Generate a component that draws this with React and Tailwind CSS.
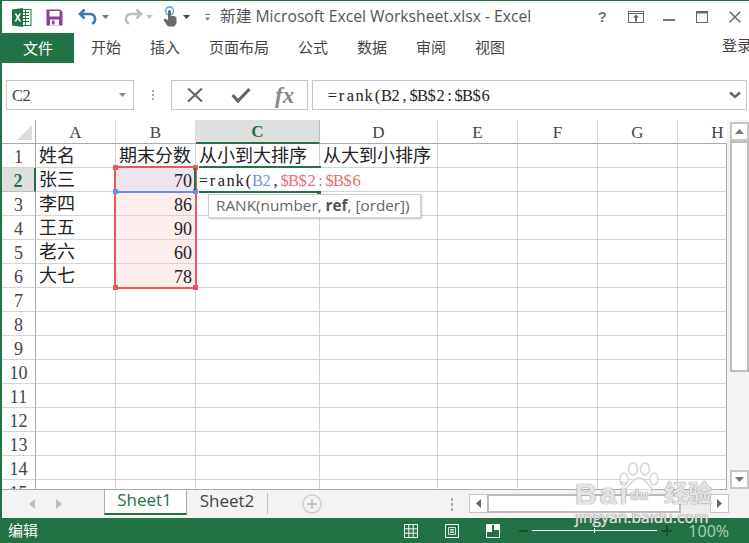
import React from "react";

const serif = "font-['Liberation_Serif','Noto_Sans_CJK_SC',serif]";
const cjk = "font-['Liberation_Serif','Noto_Sans_CJK_SC',sans-serif]";
const ui = "font-['Open_Sans','Noto_Sans_CJK_SC',sans-serif]";

const cols = ["A", "B", "C", "D", "E", "F", "G", "H"];
const colTracks = "grid-cols-[34px_80px_80px_124px_118px_80px_80px_80px_80px]";

const rowsData = {
  1: ["姓名", "期末分数", "从小到大排序", "从大到小排序"],
  2: ["张三", "70"],
  3: ["李四", "86"],
  4: ["王五", "90"],
  5: ["老六", "60"],
  6: ["大七", "78"],
};
const rowNums = Array.from({ length: 15 }, (_, i) => i + 1);

// The reference's cell font has half-width latin glyphs: every character takes 9px.
function Half({ text, className = "" }) {
  return (
    <span className={`inline-flex ${className}`}>
      {text.split("").map((ch, i) => (
        <span key={i} className="w-[9px] flex justify-center">{ch}</span>
      ))}
    </span>
  );
}

function ExcelLogo() {
  return (
    <svg width="21" height="21" viewBox="0 0 21 21">
      <rect x="9" y="2.5" width="11" height="16" fill="#fff" stroke="#217346" />
      <path d="M12 5.500h6M12 8.500h6M12 11.500h6M12 14.500h6M14.500 3v15" stroke="#217346" strokeWidth="1" fill="none" />
      <path d="M1 2.500L12 1v19L1 18.500z" fill="#217346" />
      <path d="M3.600 6.500h1.900l1.300 2.500 1.400-2.500h1.800l-2.200 4 2.300 4H8.400L6.800 11.700 5.300 14.500H3.500l2.300-4z" fill="#fff" />
    </svg>
  );
}
function SaveIcon() {
  return (
    <svg width="17" height="17" viewBox="0 0 17 17">
      <path d="M0.500 0.500h13.500l2.500 2.500v13.500h-16z" fill="#8a3f9d" />
      <rect x="3.500" y="2" width="10" height="5.500" fill="#fff" />
      <rect x="4" y="10.500" width="9" height="6" fill="#fff" />
      <rect x="6" y="11.500" width="2.500" height="4" fill="#8a3f9d" />
    </svg>
  );
}
function UndoIcon({ color }) {
  return (
    <svg width="20" height="18" viewBox="0 0 20 18">
      <path d="M6.500 1.500L2 6l4.500 4.500M3 6h9a5 5 0 0 1 2 9.600" fill="none" stroke={color} strokeWidth="2.600" />
    </svg>
  );
}
function RedoIcon({ color }) {
  return (
    <svg width="20" height="18" viewBox="0 0 20 18">
      <path d="M13.500 1.500L18 6l-4.500 4.500M17 6H8a5 5 0 0 0-2 9.600" fill="none" stroke={color} strokeWidth="2.600" />
    </svg>
  );
}
function TouchIcon() {
  return (
    <svg width="16" height="22" viewBox="0 0 16 22">
      <circle cx="7.500" cy="5" r="4" fill="none" stroke="#5b9bd5" strokeWidth="1.500" />
      <path d="M6 5.500a1.500 1.500 0 0 1 3 0V10h3.500l2 1.500V17l-2 3.500H6L1.500 14l1-1.500L6 14z" fill="#6a6a6a" />
    </svg>
  );
}
function Caret({ color = "#6a6a6a", w = 7 }) {
  return (
    <svg width={w} height="4" viewBox="0 0 7 4">
      <path d="M0 0h7L3.500 4z" fill={color} />
    </svg>
  );
}

function TitleBar() {
  return (
    <div className="h-[32px] flex items-center shrink-0">
      <div className="ml-[9px]"><ExcelLogo /></div>
      <div className="ml-[14px]"><SaveIcon /></div>
      <div className="ml-[15px]"><UndoIcon color="#3f78b5" /></div>
      <div className="ml-[4px]"><Caret color="#777" /></div>
      <div className="ml-[14px]"><RedoIcon color="#bdbdbd" /></div>
      <div className="ml-[3px]"><Caret color="#c4c4c4" /></div>
      <div className="ml-[9px]"><TouchIcon /></div>
      <div className="ml-[5px]"><Caret color="#444" /></div>
      <div className="ml-[15px] flex flex-col gap-[2px] items-center">
        <div className="w-[5px] h-px bg-[#777]" />
        <Caret color="#777" w={5} />
      </div>
      <div className={`ml-[10px] text-[15.700px] leading-none text-[#555] whitespace-nowrap ${ui}`}>
        新建 Microsoft Excel Worksheet.xlsx - Excel
      </div>
      <div className="ml-auto flex items-center">
        <span className="text-[15px] font-bold text-[#777] font-['Liberation_Sans',sans-serif] mr-[21px]">?</span>
        <svg width="16" height="12" viewBox="0 0 16 12" className="mr-[19px]">
          <rect x="0.500" y="0.500" width="15" height="11" fill="none" stroke="#666" />
          <path d="M1 2.500h14" stroke="#666" />
          <path d="M8 3.500l3 3H9v4H7v-4H5z" fill="#666" />
        </svg>
        <div className="w-[12px] h-[2px] bg-[#777] mt-[6px] mr-[21px]" />
        <svg width="12" height="12" viewBox="0 0 12 12" className="mr-[21px]">
          <rect x="0.500" y="0.500" width="11" height="11" fill="none" stroke="#666" />
          <path d="M0 1.500h12" stroke="#666" strokeWidth="2" />
        </svg>
        <svg width="12" height="12" viewBox="0 0 12 12" className="mr-[8px]">
          <path d="M0.700 0.700l10.600 10.600M11.300 0.700L0.700 11.300" stroke="#666" strokeWidth="1.500" />
        </svg>
      </div>
    </div>
  );
}

function RibbonTabs() {
  const tabs = ["开始", "插入", "页面布局", "公式", "数据", "审阅", "视图"];
  return (
    <div className={`h-[30px] flex items-center shrink-0 text-[15px] leading-none text-[#444] ${ui}`}>
      <div className="w-[72px] h-full bg-[#217346] text-white flex items-center justify-center">文件</div>
      <div className="ml-[17px] flex gap-[29px] -mt-[2px]">
        {tabs.map((t) => <span key={t}>{t}</span>)}
      </div>
      <span className="absolute left-[720px] top-[37px] whitespace-nowrap">登录</span>
    </div>
  );
}

function FormulaBar() {
  return (
    <div className="h-[30px] mt-[17px] flex shrink-0 items-stretch">
      <div className={`ml-[4px] w-[128px] border border-[#c6c6c6] flex items-center pl-[6px] pr-[7px] text-[16.500px] leading-none text-[#444] ${serif}`}>
        <Half text="C2" className="pt-[2px]" />
        <span className="ml-auto flex"><Caret color="#888" /></span>
      </div>
      <div className="w-[37px] flex flex-col items-center justify-center gap-[2px]">
        <i className="w-[2px] h-[2px] bg-[#a8a8a8]" />
        <i className="w-[2px] h-[2px] bg-[#a8a8a8]" />
        <i className="w-[2px] h-[2px] bg-[#a8a8a8]" />
      </div>
      <div className="w-[137px] border border-[#c6c6c6] flex items-center pl-[14px]">
        <svg width="18" height="16" viewBox="0 0 18 16">
          <path d="M2 1.500l14 13M16 1.500L2 14.500" stroke="#666" strokeWidth="2.200" />
        </svg>
        <svg width="20" height="16" viewBox="0 0 20 16" className="ml-[27px]">
          <path d="M1.500 8l5.500 6L18.500 2" fill="none" stroke="#666" strokeWidth="3.200" />
        </svg>
        <span className="ml-[24px] text-[23px] italic font-bold leading-none text-[#888] font-['Liberation_Serif',serif]">fx</span>
      </div>
      <div className="ml-[4px] flex-1 mr-[2px] border border-[#c6c6c6] flex items-center pl-[15px] pr-[5px]">
        <Half text="=rank(B2,$B$2:$B$6" className={`pt-[3px] text-[16.500px] leading-none text-[#222] ${serif}`} />
        <svg width="12" height="8" viewBox="0 0 12 8" className="ml-auto">
          <path d="M1 1.500l5 4.500 5-4.500" fill="none" stroke="#666" strokeWidth="2.400" />
        </svg>
      </div>
    </div>
  );
}

function Sheet() {
  return (
    <div className="mt-[10px] h-[370px] flex shrink-0 relative">
      <div className="w-[725px] h-[370px] overflow-hidden relative shrink-0 border-b border-[#ababab]">
        <div className={`grid ${colTracks} auto-rows-[24px] leading-none text-[#333] ${cjk}`}>
          <div className="border-r border-b border-[#ababab] relative flex items-end justify-end pr-[3px] pb-[3px]">
            <svg width="15" height="15" viewBox="0 0 15 15"><path d="M15 0v15H0z" fill="#dcdcdc" /></svg>
          </div>
          {cols.map((c) => (
            <div
              key={c}
              className={
                c === "C"
                  ? "text-[17px] pt-[1px] bg-[#dfdfdf] border-b-2 border-r border-b-[#217346] border-r-[#bdbdbd] flex items-center justify-center text-[#217346] font-bold"
                  : "text-[17px] pt-[1px] border-b border-r border-b-[#ababab] border-r-[#d8d8d8] flex items-center justify-center text-[#444]"
              }
            >
              {c}
            </div>
          ))}
          {rowNums.map((r) => (
            <React.Fragment key={r}>
              <div
                className={
                  r === 2
                    ? "text-[18px] pt-[2px] bg-[#dfdfdf] border-r-2 border-b border-r-[#217346] border-b-[#bdbdbd] flex items-center justify-center text-[#217346] font-bold"
                    : "text-[18px] pt-[2px] border-r border-b border-r-[#ababab] border-b-[#d4d4d4] flex items-center justify-center text-[#444]"
                }
              >
                {r}
              </div>
              {cols.map((c, ci) => {
                const v = (rowsData[r] || [])[ci];
                const inB = c === "B" && r >= 2 && r <= 6;
                const bg = inB ? (r === 2 ? "bg-[#eee4ee]" : "bg-[#fdeeee]") : "";
                const align = inB ? "justify-end pr-[3px] pt-[2px]" : "pl-[3px] pt-[1px]";
                return (
                  <div
                    key={c}
                    className={`text-[18px] text-[#222] border-r border-b border-[#d4d4d4] flex items-center whitespace-nowrap ${bg} ${align}`}
                  >
                    {v}
                  </div>
                );
              })}
            </React.Fragment>
          ))}
        </div>

        {/* right edge of the cell area, below the column headers */}
        <i className="absolute left-[724px] top-[23px] bottom-0 w-px bg-[#ababab]" />

        {/* range selection */}
        <div className="absolute left-[112px] top-[46px] w-[83px] h-[123px] border-2 border-[#e8595c]" />
        <i className="absolute left-[111px] top-[45px] w-[5px] h-[5px] bg-[#e8595c]" />
        <i className="absolute left-[191px] top-[45px] w-[5px] h-[5px] bg-[#e8595c]" />
        <i className="absolute left-[111px] top-[165px] w-[5px] h-[5px] bg-[#e8595c]" />
        <i className="absolute left-[191px] top-[165px] w-[5px] h-[5px] bg-[#e8595c]" />
        <div className="absolute left-[114px] top-[71px] w-[79px] h-[2px] bg-[#6b8ee0]" />
        <i className="absolute left-[111px] top-[69px] w-[5px] h-[5px] bg-[#6b8ee0]" />
        <i className="absolute left-[191px] top-[69px] w-[5px] h-[5px] bg-[#6b8ee0]" />

        {/* active cell */}
        <div className="absolute left-[197px] top-[46px] w-[122px] h-[2px] bg-[#217346]" />
        <div className="absolute left-[192px] top-[48px] w-[2px] h-[22px] bg-[#217346]" />
        <div className="absolute left-[197px] top-[71px] w-[118px] h-[2px] bg-[#217346]" />
        <i className="absolute left-[315px] top-[71px] w-[4px] h-[3px] bg-[#217346]" />
        <div className={`absolute left-[197px] top-[48px] h-[23px] pt-[3px] bg-white flex items-center text-[16.500px] leading-none whitespace-nowrap ${serif}`}>
          <Half text="=rank(" className="text-[#222]" />
          <Half text="B2" className="text-[#6f94e6]" />
          <Half text="," className="text-[#222]" />
          <Half text="$B$2:$B$6" className="text-[#ee6a6d]" />
        </div>

        {/* function tooltip */}
        <div className={`absolute left-[206px] top-[74px] w-[213px] h-[24px] bg-white border border-[#cfcfcf] shadow-[1px_1px_2px_rgba(0,0,0,0.25)] flex items-center pl-[7px] text-[15.300px] leading-none text-[#666] whitespace-nowrap ${ui}`}>
          RANK(number,&nbsp;<b className="font-bold text-[#555]">ref</b>, [order])
        </div>
      </div>

      <div className="w-[22px] bg-[#f3f3f3] flex flex-col items-start pl-[3px] pt-[2px]">
        <div className="w-[19px] h-[19px] border-2 border-[#c6c6c6] bg-white flex items-center justify-center shrink-0">
          <svg width="9" height="5" viewBox="0 0 9 5"><path d="M0 5h9L4.500 0z" fill="#777" /></svg>
        </div>
        <div className="w-[19px] h-[231px] border-2 border-[#bcbcbc] bg-white shrink-0" />
        <div className="w-[19px] h-[19px] mt-auto mb-px border-2 border-[#c6c6c6] bg-white flex items-center justify-center shrink-0">
          <svg width="9" height="5" viewBox="0 0 9 5"><path d="M0 0h9L4.500 5z" fill="#777" /></svg>
        </div>
      </div>
    </div>
  );
}

function TabBar() {
  return (
    <div className={`h-[28px] bg-[#f3f3f3] flex items-start shrink-0 ${ui}`}>
      <div className="w-[102px] h-full flex items-center pl-[27px] gap-[21px]">
        <svg width="6" height="10" viewBox="0 0 6 10"><path d="M6 0v10L0 5z" fill="#bdbdbd" /></svg>
        <svg width="6" height="10" viewBox="0 0 6 10"><path d="M0 0v10l6-5z" fill="#bdbdbd" /></svg>
      </div>
      <div className="w-[83px] h-[26px] pb-[4px] pr-[2px] bg-white border-l border-r border-[#ababab] border-b-2 border-b-[#217346] -mt-px text-[#217346] text-[17px] leading-none flex items-center justify-center">
        Sheet1
      </div>
      <div className="w-[81px] h-[21px] mt-[3px] pb-[7px] text-[#444] text-[17px] leading-none flex items-center justify-center border-r border-[#bdbdbd]">
        Sheet2
      </div>
      <svg width="20" height="20" viewBox="0 0 20 20" className="ml-[34px] mt-[4px]">
        <circle cx="10" cy="10" r="9" fill="none" stroke="#d0d0d0" strokeWidth="1.500" />
        <path d="M10 5v10M5 10h10" stroke="#c4c4c4" strokeWidth="2" />
      </svg>
      <div className="ml-[129px] mt-[8px] flex flex-col gap-[2px]">
        <i className="w-[2px] h-[3px] bg-[#a8a8a8]" />
        <i className="w-[2px] h-[3px] bg-[#a8a8a8]" />
        <i className="w-[2px] h-[3px] bg-[#a8a8a8]" />
      </div>
      <div className="ml-[16px] mt-[4px] flex">
        <div className="w-[19px] h-[19px] border border-[#c6c6c6] bg-white flex items-center justify-center">
          <svg width="5" height="9" viewBox="0 0 5 9"><path d="M5 0v9L0 4.500z" fill="#666" /></svg>
        </div>
        <div className="w-[194px] h-[19px] border-2 border-[#bcbcbc] bg-white -ml-px" />
        <div className="w-[29px] h-[19px] bg-[#ededed]" />
        <div className="w-[19px] h-[19px] border border-[#c6c6c6] bg-white flex items-center justify-center">
          <svg width="5" height="9" viewBox="0 0 5 9"><path d="M0 0v9l5-4.500z" fill="#666" /></svg>
        </div>
      </div>
    </div>
  );
}

function StatusBar() {
  return (
    <div className={`h-[25px] bg-[#217346] flex items-center shrink-0 text-white ${ui}`}>
      <span className="ml-[6px] text-[15px] leading-none">编辑</span>
      <div className="ml-auto flex items-center">
        <svg width="14" height="14" viewBox="0 0 14 14">
          <path d="M0.500 0.500h13v13h-13zM0.500 4.800h13M0.500 9.200h13M4.800 0.500v13M9.200 0.500v13" fill="none" stroke="#fff" />
        </svg>
        <svg width="14" height="14" viewBox="0 0 14 14" className="ml-[27px]">
          <path d="M0.500 0.500h13v13h-13z" fill="none" stroke="#fff" />
          <path d="M3.500 3.500h7v7h-7zM5 5.500h4M5 7h4M5 8.500h4" fill="none" stroke="#fff" strokeWidth="0.800" />
        </svg>
        <svg width="14" height="14" viewBox="0 0 14 14" className="ml-[27px]">
          <path d="M0.500 0.500h13v13h-13z" fill="none" stroke="#fff" />
          <path d="M1 1h5v7H1zM8 1h5v5H8z" fill="#fff" />
        </svg>
        <i className="ml-[19px] w-[9px] h-[2px] bg-[#154d2d]" />
        <div className="ml-[4px] w-[125px] h-px bg-white relative">
          <i className="absolute left-[62px] -top-[2px] w-px h-[5px] bg-white" />
        </div>
        <svg width="12" height="12" viewBox="0 0 12 12" className="ml-[4px]">
          <path d="M6 0.500v11M0.500 6h11" stroke="#154d2d" strokeWidth="2" />
        </svg>
        <span className="ml-[15px] mr-[20px] text-[16px] leading-none text-[#a8d3b7]">100%</span>
      </div>
    </div>
  );
}

function Watermark() {
  const shade = "[text-shadow:0_0_1px_#7a7a7a,0_0_1px_#9a9a9a]";
  return (
    <div className="absolute left-[573px] top-[461px] w-[170px] h-[72px] pointer-events-none">
      <svg width="42" height="37" viewBox="0 0 42 37" className="absolute left-[43px] top-0">
        <g fill="#ffffff" fillOpacity="0.6" stroke="#d6d6d6" strokeWidth="1.500">
          <ellipse cx="6" cy="17" rx="4" ry="6" />
          <ellipse cx="15" cy="7" rx="4.500" ry="6" />
          <ellipse cx="27" cy="7" rx="4.500" ry="6" />
          <ellipse cx="36" cy="17" rx="4" ry="6" />
          <path d="M21 16c5 0 7 5 11 8 5 5 0 12-11 9-11 3-16-4-11-9 4-3 6-8 11-8z" />
        </g>
      </svg>
      <span className={`absolute left-0 top-[17px] text-[30px] tracking-[3px] leading-none font-bold text-white/80 font-['Liberation_Sans',sans-serif] ${shade}`}>Bai</span>
      <span className={`absolute left-[55px] top-[25px] text-[15px] leading-none font-bold text-white/80 font-['Liberation_Sans',sans-serif] ${shade}`}>du</span>
      <span className={`absolute left-[89px] top-[18px] text-[24px] leading-none font-bold text-white/80 font-['Noto_Sans_CJK_SC',sans-serif] ${shade}`}>经验</span>
      <span className={`absolute left-0 top-[48px] text-[15.700px] leading-none text-white/80 font-['Open_Sans',sans-serif] ${shade}`}>jingyan.baidu.com</span>
    </div>
  );
}

export default function App() {
  return (
    <div className="w-[749px] h-[543px] relative overflow-hidden bg-white border-t border-l-2 border-[#217346] flex flex-col">
      <TitleBar />
      <RibbonTabs />
      <FormulaBar />
      <Sheet />
      <TabBar />
      <StatusBar />
      <Watermark />
    </div>
  );
}
